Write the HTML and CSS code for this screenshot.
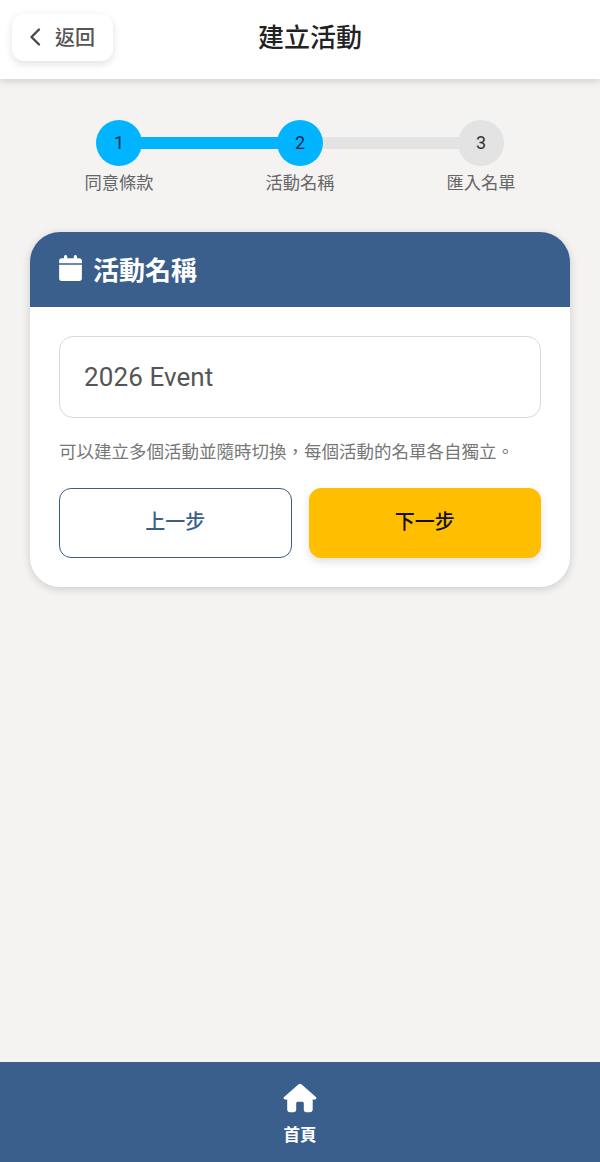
FILE: index.html
```html
<!DOCTYPE html>
<html lang="zh-Hant">

<head>
    <meta charset="UTF-8">
    <meta name="viewport" content="width=device-width, initial-scale=1.0">
    <title>建立活動</title>
    <link rel="stylesheet" href="styles.css">
</head>

<body>
    <div class="page">
        <header class="top-bar">
            <a href="javascript:;" class="back-btn">
                <svg class="back-icon" width="14" height="20" viewBox="0 0 14 20"><path d="M11 2.500 3.500 10l7.500 7.500" fill="none" stroke="#4a4a4a" stroke-width="2.400" stroke-linecap="round" stroke-linejoin="round"/></svg>
                <span>返回</span>
            </a>
            <h1 class="top-title">建立活動</h1>
        </header>

        <main class="content">
            <div class="steps">
                <div class="step done">
                    <div class="step-num">1</div>
                    <div class="step-label">同意條款</div>
                </div>
                <div class="step done">
                    <div class="step-num">2</div>
                    <div class="step-label">活動名稱</div>
                </div>
                <div class="step">
                    <div class="step-num">3</div>
                    <div class="step-label">匯入名單</div>
                </div>
            </div>

            <section class="card">
                <div class="card-head">
                    <svg width="23" height="26" viewBox="0 0 448 512"><path fill="#fff" d="M128 0c18 0 32 14 32 32v32h128V32c0-18 14-32 32-32s32 14 32 32v32h48c27 0 48 21 48 48v48H0v-48c0-27 21-48 48-48h48V32c0-18 14-32 32-32zM0 192h448v272c0 27-21 48-48 48H48c-27 0-48-21-48-48V192z"/></svg>
                    <h2 class="card-title">活動名稱</h2>
                </div>
                <div class="card-body">
                    <input type="text" class="name-input" value="2026 Event">
                    <p class="hint">可以建立多個活動並隨時切換，每個活動的名單各自獨立。</p>
                    <div class="btn-row">
                        <a href="javascript:;" class="btn btn-prev">上一步</a>
                        <a href="javascript:;" class="btn btn-next">下一步</a>
                    </div>
                </div>
            </section>
        </main>

        <nav class="bottom-nav">
            <a href="javascript:;" class="nav-item">
                <svg width="34" height="30" viewBox="0 0 34 30"><path fill="#fff" d="M17 .8c.5 0 1 .2 1.400.5l14.500 12.800c.6.5.7 1.400.2 2-.3.3-.7.5-1.100.5h-2.300v9.900c0 1.500-1.200 2.700-2.700 2.700h-3.700c-1.400 0-2.500-1.100-2.500-2.500v-6.400c0-.9-.7-1.600-1.600-1.600h-4.400c-.9 0-1.600.7-1.600 1.600v6.400c0 1.400-1.100 2.500-2.500 2.500H6.900c-1.500 0-2.700-1.200-2.700-2.700v-9.900H2c-.4 0-.8-.2-1.100-.5-.5-.6-.4-1.500.2-2L15.600 1.300c.4-.3.900-.5 1.400-.5z"/></svg>
                <span class="nav-label">首頁</span>
            </a>
        </nav>
    </div>
</body>

</html>
```

FILE: styles.css
```css
* {
    box-sizing: border-box;
}

body,
html {
    height: 100%;
    margin: 0;
}

body {
    font-family: Roboto, "Noto Sans CJK TC", sans-serif;
    background-color: #f4f3f2;
    color: #222;
}

a {
    text-decoration: none;
    color: inherit;
}

.page {
    display: flex;
    flex-direction: column;
    height: 100%;
}

/* 顶部栏 */
.top-bar {
    position: relative;
    display: flex;
    align-items: center;
    justify-content: center;
    height: 79px;
    flex-shrink: 0;
    padding: 0 0 3px 20px;
    background-color: #fff;
    box-shadow: 0 2px 8px rgba(0, 0, 0, .16);
}

.back-btn {
    position: absolute;
    left: 12px;
    top: 14px;
    display: flex;
    align-items: center;
    gap: 13px;
    width: 101px;
    height: 47px;
    padding: 0 0 2px 16px;
    border-radius: 12px;
    background-color: #fff;
    box-shadow: 0 3px 8px rgba(0, 0, 0, .12);
    font-size: 20px;
    font-weight: 500;
    color: #555;
}

.top-title {
    margin: 0;
    font-size: 26px;
    font-weight: 500;
    line-height: 38px;
    color: #222;
}

.content {
    flex: 1;
    padding: 41px 30px 0;
}

/* 步骤条 */
.steps {
    display: flex;
    justify-content: center;
}

.step {
    position: relative;
    display: flex;
    flex-direction: column;
    align-items: center;
    width: 181px;
    flex-shrink: 0;
}

.step:not(:last-child)::after {
    content: "";
    position: absolute;
    left: 50%;
    top: 17px;
    width: 100%;
    height: 12px;
    background-color: #e3e3e3;
}

.step:first-child::after {
    background-color: #00b4ff;
}

.step-num {
    position: relative;
    z-index: 1;
    width: 46px;
    height: 46px;
    border-radius: 50%;
    background-color: #e3e3e3;
    font-size: 18px;
    line-height: 46px;
    text-align: center;
    color: #333;
}

.step.done .step-num {
    background-color: #00b4ff;
    color: #10284a;
}

.step-label {
    margin-top: 5px;
    font-size: 17.3px;
    line-height: 25px;
    white-space: nowrap;
    color: #666;
}

/* 卡片 */
.card {
    margin-top: 36px;
    border-radius: 30px;
    overflow: hidden;
    background-color: #fff;
    box-shadow: 0 2px 8px rgba(0, 0, 0, .16);
}

.card-head {
    display: flex;
    align-items: center;
    gap: 11px;
    height: 75px;
    padding: 0 0 3px 29px;
    background-color: #3a5f8c;
    color: #fff;
}

.card-title {
    margin: 0;
    font-size: 26px;
    font-weight: 700;
}

.card-body {
    padding: 29px;
}

.name-input {
    display: block;
    width: 100%;
    height: 82px;
    padding: 0 24px;
    border: 1px solid #d9d9d9;
    border-radius: 14px;
    background-color: #fff;
    font-family: inherit;
    font-size: 26px;
    letter-spacing: .1px;
    color: #555;
    outline: none;
}

.hint {
    margin: 21px 0 0;
    font-size: 17.5px;
    line-height: 26px;
    color: #777;
}

.btn-row {
    display: flex;
    gap: 17px;
    margin-top: 23px;
}

.btn {
    flex: 1;
    height: 70px;
    border-radius: 12px;
    font-size: 20px;
    font-weight: 500;
    line-height: 66px;
    text-align: center;
}

.btn-prev {
    border: 1px solid #3a5f8c;
    background-color: #fff;
    color: #3a5f8c;
}

.btn-next {
    border: 1px solid #ffbe00;
    background-color: #ffbe00;
    color: #111;
    box-shadow: 0 4px 8px rgba(0, 0, 0, .12);
}

/* 底部导航 */
.bottom-nav {
    display: flex;
    justify-content: center;
    height: 100px;
    flex-shrink: 0;
    background-color: #3a5f8c;
}

.nav-item {
    display: flex;
    flex-direction: column;
    align-items: center;
    padding-top: 21px;
    color: #fff;
}

.nav-label {
    margin-top: 11px;
    font-size: 16.5px;
    font-weight: 700;
    line-height: 24px;
}
```
